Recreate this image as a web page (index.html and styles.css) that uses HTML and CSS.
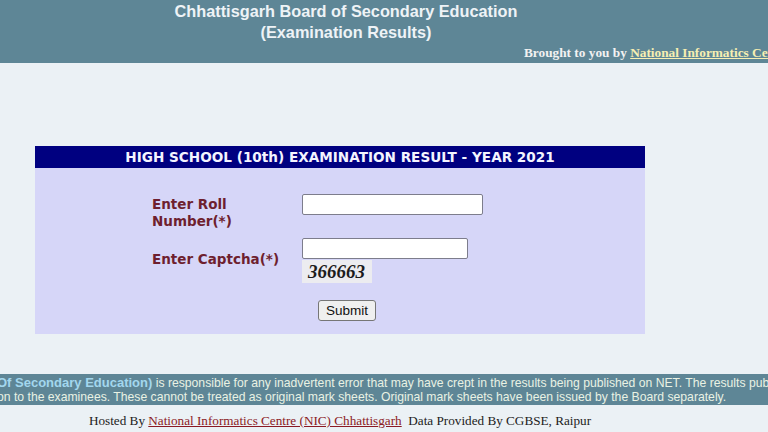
FILE: index.html
```html
<!DOCTYPE html>
<html lang="en">
<head>
<meta charset="utf-8">
<title>CGBSE Examination Results</title>
<link rel="stylesheet" href="styles.css">
</head>
<body>
<header class="top">
  <div class="title">
    <div class="title-line">Chhattisgarh Board of Secondary Education</div>
    <div class="title-line">(Examination Results)</div>
  </div>
  <div class="brought">Brought to you by <a href="#" class="nic-link">National Informatics Centre</a></div>
</header>
<main class="page">
  <section class="box">
    <div class="box-head">HIGH SCHOOL (10th) EXAMINATION RESULT - YEAR 2021</div>
    <form class="form">
      <label class="lbl lbl-roll" for="roll">Enter Roll<br>Number(*)</label>
      <div class="field"><input id="roll" class="inp inp-roll" type="text"></div>
      <label class="lbl lbl-cap" for="cap">Enter Captcha(*)</label>
      <div class="field">
        <input id="cap" class="inp inp-cap" type="text">
        <div class="captcha">366663</div>
      </div>
      <div class="submit-row"><button class="btn" type="button">Submit</button></div>
    </form>
  </section>
</main>
<div class="disc">
  <div class="disc-line"><b class="disc-board">Of Secondary Education)</b> is responsible for any inadvertent error that may have crept in the results being published on NET. The results published on net are for immediate information</div>
  <div class="disc-line">on to the examinees. These cannot be treated as original mark sheets. Original mark sheets have been issued by the Board separately.</div>
</div>
<footer class="foot">Hosted By <a href="#" class="foot-link">National Informatics Centre (NIC) Chhattisgarh</a>&nbsp; Data Provided By CGBSE, Raipur</footer>
</body>
</html>
```

FILE: styles.css
```css
html, body {
  margin: 0;
  padding: 0;
}
body {
  width: 768px;
  height: 432px;
  overflow: hidden;
  background: #ebf1f5;
  font-family: "Liberation Sans", Arial, sans-serif;
}
.top {
  height: 63px;
  background: #5e8696;
  overflow: hidden;
}
.title {
  width: 692px;
  text-align: center;
  font-weight: bold;
  font-size: 16.3px;
  line-height: 21px;
  color: #eef3f6;
  padding-top: 1px;
}
.brought {
  white-space: nowrap;
  padding-left: 524px;
  margin-top: 2px;
  font-family: "Liberation Serif", "Times New Roman", serif;
  font-weight: bold;
  font-size: 13.3px;
  line-height: 16px;
  color: #f2f2f2;
}
.nic-link {
  color: #f6efb2;
  text-decoration: underline;
}
.page {
  padding-top: 83px;
}
.box {
  margin-left: 35px;
  width: 610px;
  background: #d6d6f8;
}
.box-head {
  height: 22px;
  background: #000080;
  color: #f4f4ff;
  font-family: "DejaVu Sans", Verdana, sans-serif;
  font-weight: bold;
  font-size: 13.6px;
  line-height: 23px;
  text-align: center;
}
.form {
  display: grid;
  grid-template-columns: 150px 1fr;
  row-gap: 8px;
  padding: 26px 0 13px 117px;
}
.lbl {
  font-family: "DejaVu Sans", Verdana, sans-serif;
  font-weight: bold;
  font-size: 13.5px;
  line-height: 17px;
  color: #6e1f2f;
}
.lbl-roll {
  margin-top: 2px;
}
.lbl-cap {
  margin-top: 13px;
}
.field {
  display: flex;
  flex-direction: column;
  align-items: flex-start;
  gap: 1px;
}
.inp {
  box-sizing: border-box;
  height: 21px;
  margin: 0;
  padding: 1px 3px;
  border: 1px solid #7d7d8c;
  border-radius: 2px;
  background: #ffffff;
}
.inp-roll {
  width: 181px;
}
.inp-cap {
  width: 166px;
}
.captcha {
  box-sizing: border-box;
  width: 70px;
  height: 23px;
  background: #ececf0;
  padding-left: 6px;
  font-family: "Liberation Serif", "Times New Roman", serif;
  font-weight: bold;
  font-style: italic;
  font-size: 19px;
  line-height: 23px;
  color: #1c1c1c;
}
.submit-row {
  grid-column: 1 / -1;
  margin-left: -117px;
  padding-left: 14px;
  padding-top: 9px;
  text-align: center;
}
.btn {
  box-sizing: border-box;
  width: 58px;
  height: 21px;
  margin: 0;
  padding: 0;
  border: 1px solid #767676;
  border-radius: 3px;
  background: #efefef;
  font-family: "Liberation Sans", Arial, sans-serif;
  font-size: 13.5px;
  color: #111;
}
.disc {
  margin-top: 40px;
  height: 31px;
  box-sizing: border-box;
  padding-top: 2px;
  background: #5e8696;
  overflow: hidden;
  color: #e9f2e4;
  font-size: 12.2px;
  line-height: 13.5px;
}
.disc-line {
  white-space: nowrap;
  margin-left: -3px;
}
.disc-board {
  color: #a3d7ee;
  font-size: 13px;
}
.foot {
  width: 680px;
  margin-top: 8px;
  text-align: center;
  font-family: "Liberation Serif", "Times New Roman", serif;
  font-size: 13.2px;
  line-height: 16px;
  color: #222;
}
.foot-link {
  color: #8b1a24;
  text-decoration: underline;
}
```
